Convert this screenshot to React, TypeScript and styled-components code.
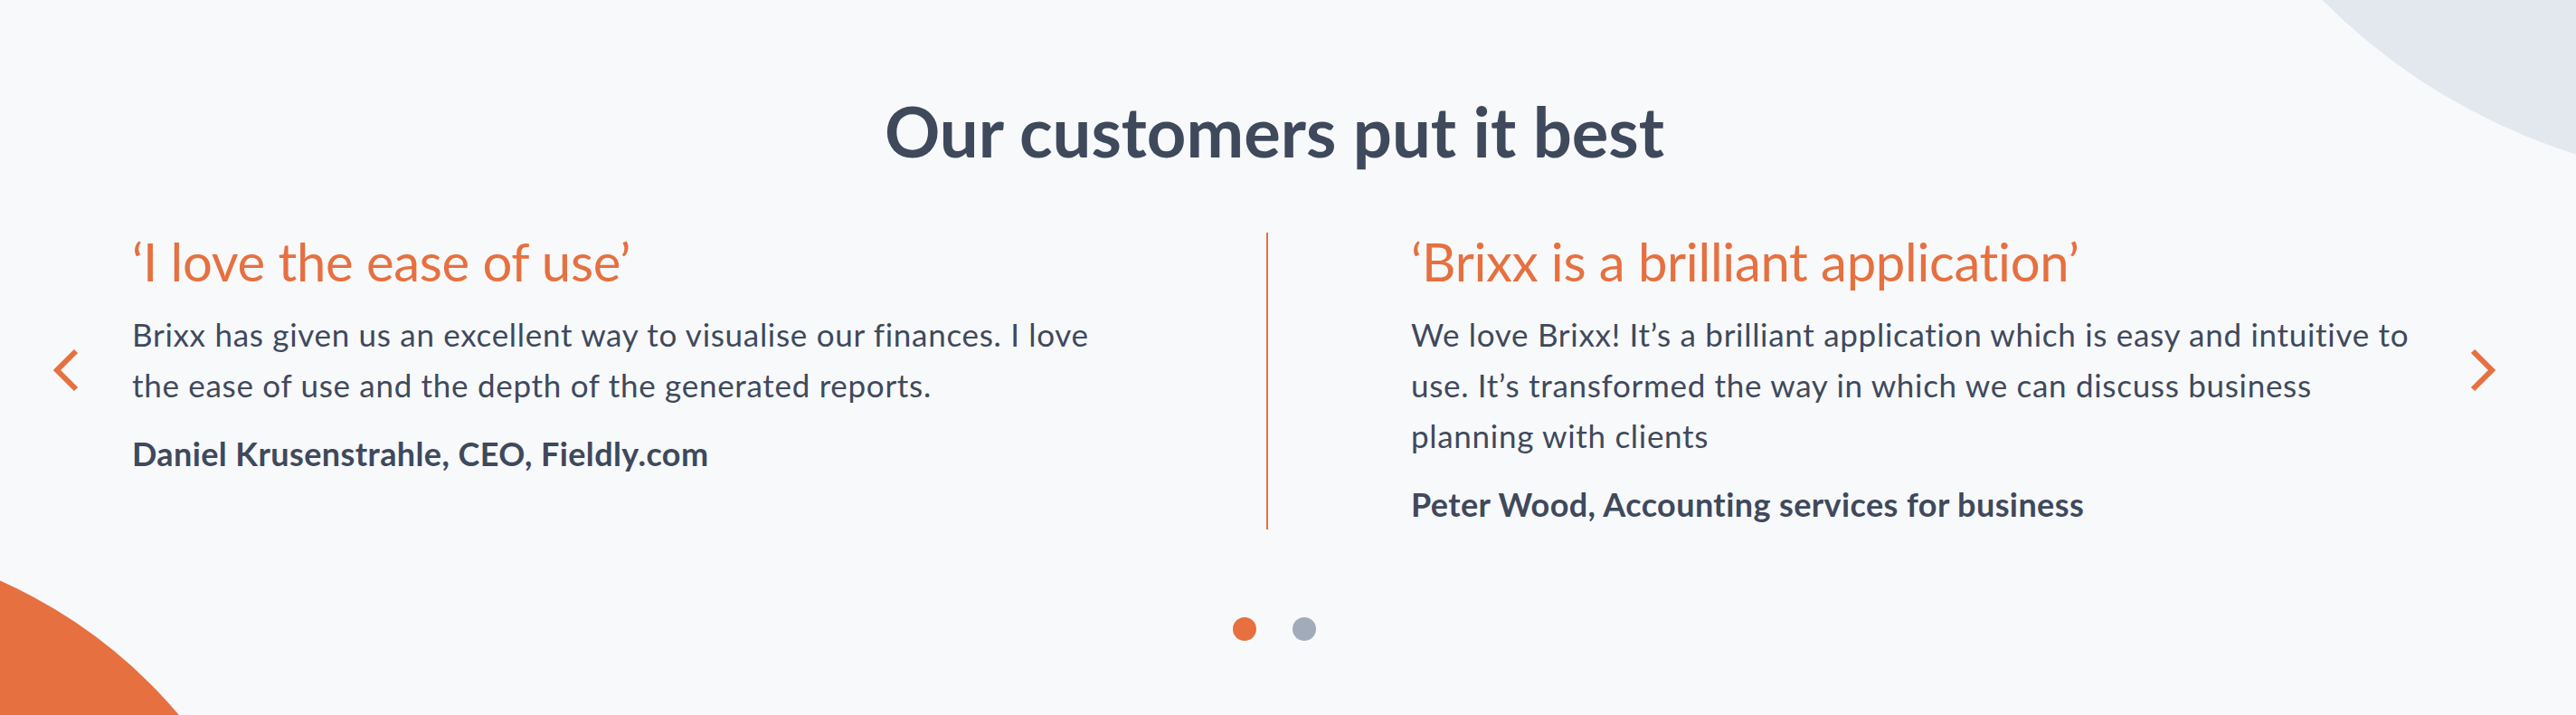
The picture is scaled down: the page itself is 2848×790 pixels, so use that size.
import React, { FC } from 'react';
import styled, { createGlobalStyle } from 'styled-components';

const ORANGE = '#e6703f';
const SLATE = '#3f495c';

const GlobalStyle = createGlobalStyle`
	html, body {
		margin: 0;
		padding: 0;
		background: #f7f9fb;
	}
	body {
		font-family: Lato, 'Liberation Sans', sans-serif;
		color: ${SLATE};
	}
`;

const Section = styled.section`
	position: relative;
	overflow: hidden;
	width: 100%;
	height: 790px;
	background: #f7f9fb;
`;

// decorative circles peeking in from the corners
const Blob = styled.div<{ $color: string; $left: number; $top: number; $size: number }>`
	position: absolute;
	left: ${(p) => p.$left}px;
	top: ${(p) => p.$top}px;
	width: ${(p) => p.$size}px;
	height: ${(p) => p.$size}px;
	border-radius: 50%;
	background: ${(p) => p.$color};
`;

const Inner = styled.div`
	position: relative;
	display: flex;
	flex-direction: column;
	align-items: center;
	width: 2818px;
	padding-top: 99px;
`;

const Heading = styled.h2`
	margin: 0;
	font-size: 76px;
	line-height: 91px;
	font-weight: 700;
	letter-spacing: 0;
	color: ${SLATE};
`;

const Carousel = styled.div`
	display: grid;
	grid-template-columns: 146px 1fr 146px;
	width: 100%;
	margin-top: 67px;
`;

const ArrowButton = styled.button`
	display: flex;
	justify-content: center;
	align-self: start;
	margin-top: 128px;
	padding: 0;
	border: 0;
	background: none;
	cursor: pointer;
`;

const Track = styled.div`
	display: grid;
	grid-template-columns: 1fr 2px 1fr;
`;

const Divider = styled.div`
	background: ${ORANGE};
`;

const Slide = styled.div<{ $side: 'left' | 'right' }>`
	display: flex;
	flex-direction: column;
	padding-left: ${(p) => (p.$side === 'right' ? '158px' : '0')};
`;

const Content = styled.div`
	width: 1112px;
`;

const Quote = styled.h3`
	margin: 0 0 20px;
	font-size: 58px;
	line-height: 64px;
	font-weight: 400;
	letter-spacing: -0.3px;
	color: ${ORANGE};
`;

const Body = styled.p`
	margin: 0 0 20px;
	font-size: 35px;
	line-height: 56px;
	letter-spacing: 0.7px;
	color: ${SLATE};
`;

const Author = styled.p`
	margin: 0;
	font-size: 36px;
	line-height: 56px;
	font-weight: 700;
	letter-spacing: 0.4px;
	color: ${SLATE};
`;

const Dots = styled.div`
	display: flex;
	gap: 40px;
	margin-top: 97px;
`;

const Dot = styled.span<{ $active?: boolean }>`
	width: 26px;
	height: 26px;
	border-radius: 50%;
	background: ${(p) => (p.$active ? ORANGE : '#a1abba')};
`;

const Chevron: FC<{ dir: 'left' | 'right' }> = ({ dir }) => (
	<svg width="30" height="48" viewBox="0 0 30 48" fill="none">
		<path
			d={dir === 'left' ? 'M26 3 L5 24 L26 45' : 'M4 3 L25 24 L4 45'}
			stroke={ORANGE}
			strokeWidth="6"
			strokeLinejoin="miter"
		/>
	</svg>
);

const testimonials = [
	{
		quote: '‘I love the ease of use’',
		body: 'Brixx has given us an excellent way to visualise our finances. I love the ease of use and the depth of the generated reports.',
		author: 'Daniel Krusenstrahle, CEO, Fieldly.com',
	},
	{
		quote: '‘Brixx is a brilliant application’',
		body: 'We love Brixx! It’s a brilliant application which is easy and intuitive to use. It’s transformed the way in which we can discuss business planning with clients',
		author: 'Peter Wood, Accounting services for business',
	},
];

const App: FC = () => (
	<>
		<GlobalStyle />
		<Section>
			<Blob $color="#e3e8ef" $left={2365} $top={-1181} $size={1384} />
			<Blob $color={ORANGE} $left={-776} $top={594} $size={1104} />
			<Inner>
				<Heading>Our customers put it best</Heading>
				<Carousel>
					<ArrowButton aria-label="Previous">
						<Chevron dir="left" />
					</ArrowButton>
					<Track>
						<Slide $side="left">
							<Content>
								<Quote>{testimonials[0].quote}</Quote>
								<Body>{testimonials[0].body}</Body>
								<Author>{testimonials[0].author}</Author>
							</Content>
						</Slide>
						<Divider />
						<Slide $side="right">
							<Content>
								<Quote>{testimonials[1].quote}</Quote>
								<Body>{testimonials[1].body}</Body>
								<Author>{testimonials[1].author}</Author>
							</Content>
						</Slide>
					</Track>
					<ArrowButton aria-label="Next">
						<Chevron dir="right" />
					</ArrowButton>
				</Carousel>
				<Dots>
					<Dot $active />
					<Dot />
				</Dots>
			</Inner>
		</Section>
	</>
);

export default App;
